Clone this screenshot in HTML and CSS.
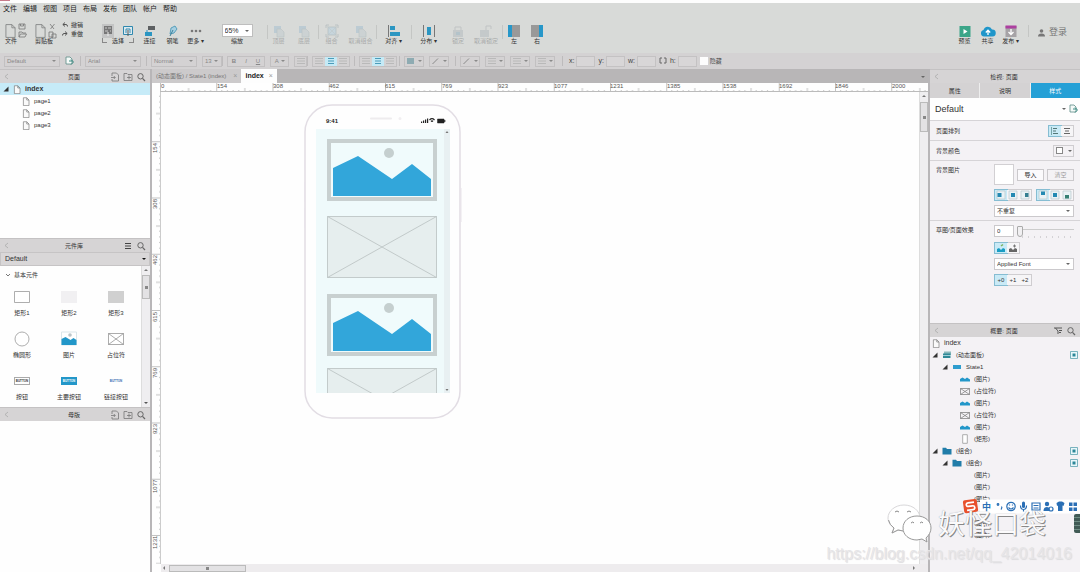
FILE: index.html
```html
<!DOCTYPE html>
<html lang="zh-CN">
<head>
<meta charset="utf-8">
<title>index</title>
<link rel="stylesheet" href="styles.css">
</head>
<body>
<svg class="defs" aria-hidden="true">
  <defs>
    <symbol id="page" viewBox="0 0 10 12"><path d="M1.5 1h4.5l3 3v7.500h-7.500zM6 1v3h3" fill="#fafafa" stroke="#777" stroke-width=".9"/></symbol>
    <symbol id="bigpage" viewBox="0 0 12 16"><path d="M1 1h6.500l3.500 3.500v10.500h-10zM7.500 1v3.500h3.500" fill="none" stroke="#7d8080" stroke-width=".9"/></symbol>
    <symbol id="addpage" viewBox="0 0 10 10"><path d="M2 4V1h4.500l2 2v6H2V7M1 5.500h4M3.800 4L5.300 5.500 3.800 7" fill="none" stroke="#777" stroke-width=".8"/></symbol>
    <symbol id="addfolder" viewBox="0 0 10 10"><path d="M1 8.500V1.500h3l1 1h4v6zM4 5.500h4M6 3.500v4" fill="none" stroke="#777" stroke-width=".8"/></symbol>
    <symbol id="search" viewBox="0 0 10 10"><circle cx="4.500" cy="4.300" r="2.700" fill="none" stroke="#666"/><path d="M6.500 6.300L9 9" stroke="#666" stroke-width="1.200"/></symbol>
    <symbol id="menu" viewBox="0 0 10 10"><path d="M2 2.500h6M2 5h6M2 7.500h6" stroke="#444"/></symbol>
    <symbol id="filter" viewBox="0 0 10 10"><path d="M1 2h8M2.500 2l2.500 3v3M6 4.500h3M6 6.500h2" stroke="#555" fill="none"/></symbol>
    <symbol id="collapse" viewBox="0 0 10 10"><path d="M6 2L3 4.500 6 7" stroke="#aaa" stroke-width=".8" fill="none"/></symbol>
    <symbol id="fold" viewBox="0 0 6 6"><path d="M5.500 .5v5h-5z" fill="#333"/></symbol>
    <symbol id="styleedit" viewBox="0 0 10 10"><path d="M1 1h4l2 2v5H1z" fill="#f5faf8" stroke="#5a8b86" stroke-width=".8"/><path d="M4 5h3.500M6 3.500L8.500 6 6 8.500" stroke="#3c8b83" fill="none"/></symbol>
    <symbol id="mountain" viewBox="0 0 10 6"><path d="M0 5.500V3L2.500 1.500 5 3 7 1.500 10 3.500v2z" fill="#2397c9"/></symbol>
    <symbol id="cross" viewBox="0 0 10 7"><path d="M.5 .5h9v6h-9zM.5 .5l9 6M9.500 .5l-9 6" fill="none" stroke="#777" stroke-width=".7"/></symbol>
    <symbol id="phonebox" viewBox="0 0 6 10"><path d="M.7 .7h4.600v8.600H.7z" fill="#fff" stroke="#999" stroke-width=".8"/></symbol>
    <symbol id="stack" viewBox="0 0 10 8"><path d="M2 .5h7v4H2z" fill="#89b8bb"/><path d="M1 2.500h7.500V7H1z" fill="#2f8896"/><path d="M1 4.500h8" stroke="#d4eef3" stroke-width=".7"/></symbol>
    <symbol id="state" viewBox="0 0 10 6"><path d="M1 1h8v4H1z" fill="#2e9dce"/></symbol>
    <symbol id="folder" viewBox="0 0 10 8"><path d="M.5 .8h3.500l1 1.200h4.500v5.500h-9z" fill="#217da9"/></symbol>
    <symbol id="target" viewBox="0 0 8 8"><path d="M.5 .5h7v7h-7z" fill="#e9f7fa" stroke="#5ba1ae" stroke-width=".8"/><path d="M2.500 2.500h3v3h-3z" fill="#2c8799"/></symbol>
    <symbol id="alignl" viewBox="0 0 10 10"><path d="M1.500 1v8" stroke="#588" stroke-width=".7"/><path d="M3 2.500h4M3 5h3M3 7.500h5" stroke="#577" stroke-width="1"/></symbol>
    <symbol id="alignc" viewBox="0 0 10 10"><path d="M2 2.500h6M3 5h4M2 7.500h6" stroke="#666"/></symbol>
    <symbol id="img-l" viewBox="0 0 10 10"><path d="M1 1h8v8H1z" fill="#e9f2f5" stroke="#b9c8cd" stroke-width=".7"/><path d="M1.500 3h4v4h-4z" fill="#2389b2"/></symbol>
    <symbol id="img-c" viewBox="0 0 10 10"><path d="M1 1h8v8H1z" fill="#e9f2f5" stroke="#b9c8cd" stroke-width=".7"/><path d="M3 3h4v4H3z" fill="#2389b2"/></symbol>
    <symbol id="img-r" viewBox="0 0 10 10"><path d="M1 1h8v8H1z" fill="#e9f2f5" stroke="#b9c8cd" stroke-width=".7"/><path d="M5 3h3.500v4H5z" fill="#357f91"/></symbol>
    <symbol id="img-t" viewBox="0 0 10 10"><path d="M1 1h8v8H1z" fill="#e9f2f5" stroke="#b9c8cd" stroke-width=".7"/><path d="M3 1.500h4V5H3z" fill="#2389b2"/></symbol>
    <symbol id="img-b" viewBox="0 0 10 10"><path d="M1 1h8v8H1z" fill="#e9f2f5" stroke="#b9c8cd" stroke-width=".7"/><path d="M3 5h4v3.500H3z" fill="#357f73"/></symbol>
    <symbol id="sketch" viewBox="0 0 10 10"><path d="M1 9V6l2-1 2 2 2-2 2 1v3z" fill="#1a9dc4"/><path d="M5 3l2-1.500" stroke="#7db35d" stroke-width="1.500"/></symbol>
    <symbol id="sketchg" viewBox="0 0 10 10"><path d="M1 9V6l2-1 2 2 2-2 2 1v3z" fill="#666"/><path d="M5 3h3M6.500 1.500v3" stroke="#777"/></symbol>
    <symbol id="layers" viewBox="0 0 14 14"><path d="M2 2h7v7H2z" fill="#bccbd3"/><path d="M5 5h4l3 3v5H5z" fill="#ccd2d3" stroke="#bbc2c4" stroke-width=".6"/></symbol>
    <symbol id="group" viewBox="0 0 14 14"><path d="M3 3h8v8H3z" fill="#c6d5dc" stroke="#aeb9bd" stroke-width=".6"/><path d="M1 4V1h3M10 1h3v3M13 10v3h-3M4 13H1v-3" fill="none" stroke="#b5bdbf" stroke-width=".8"/><path d="M2 2l10 10M12 2L2 12" fill="none" stroke="#c0c8ca" stroke-width=".6"/></symbol>
    <symbol id="lock" viewBox="0 0 14 14"><path d="M4 6V3h6v3" fill="none" stroke="#c0c3c4"/><path d="M2 6h10v7H2z" fill="#c4c9ca"/><path d="M5 8h4v3H5z" fill="#b3c3ca"/></symbol>
    <symbol id="unlock" viewBox="0 0 14 14"><path d="M7 6V2h5v3" fill="none" stroke="#c0c3c4"/><path d="M1 6h9v7H1z" fill="#c4c9ca"/></symbol>
    <symbol id="f-lines" viewBox="0 0 10 8"><path d="M1 1.500h8M1 4h8M1 6.500h8" stroke="#b2b2b2" stroke-width=".8"/></symbol>
    <symbol id="f-sel" viewBox="0 0 10 8"><path d="M2 1.500h6M2 4h6M2 6.500h6" stroke="#4b9cba"/></symbol>
    <symbol id="f-fill" viewBox="0 0 10 8"><path d="M1 1h7v6H1z" fill="#8eabb2"/></symbol>
    <symbol id="f-pen" viewBox="0 0 10 8"><path d="M1.500 7L7 1.500" stroke="#8b8b8b" stroke-width="1"/></symbol>
  </defs>
</svg>

<header class="top">
  <div class="titlestrip"><span class="brand"></span></div>
  <nav class="menubar">
    <button>文件</button><button>编辑</button><button>视图</button><button>项目</button><button>布局</button><button>发布</button><button>团队</button><button>帐户</button><button>帮助</button>
  </nav>
  <div class="toolbar">
    <div class="tool left"><span class="ico"><svg width="11" height="16"><use href="#bigpage"/></svg><svg width="9" height="16" viewBox="0 0 9 16" fill="none" stroke="#777" stroke-width=".8"><path d="M1 1h6v5H1zM2.500 1v2h3V1M1 14V9h3l1 1h3M1 14h6l1.500-3h-6z"/></svg></span><span>文件</span></div>
    <div class="tool left"><span class="ico"><svg width="11" height="16"><use href="#bigpage"/></svg><svg width="9" height="16" viewBox="0 0 9 16" fill="none" stroke="#777" stroke-width=".8"><path d="M2 1l4 5M6.500 1l-4 5M1 9h4v5H1zM4 11h4v4H4z"/></svg></span><span>剪贴板</span></div>
    <div class="undo"><button><svg width="6" height="6" viewBox="0 0 6 6"><path d="M3 .5L.8 2.500 3 4.500M1 2.500h3q1.500 0 1.500 2" fill="none" stroke="#555"/></svg>撤销</button><button><svg width="6" height="6" viewBox="0 0 6 6"><path d="M3 .5l2.200 2L3 4.500M5 2.500H2Q.5 2.500.5 4.500" fill="none" stroke="#555"/></svg>重做</button></div>
    <div class="tool"><span class="ico modes"><svg class="on" width="12" height="14" viewBox="0 0 12 14"><path d="M2 2h8v8H2z" fill="#777"/><path d="M3 4h2M6 4h3M3 7h3M8 7h1" stroke="#ccc"/><path d="M6 8v4" stroke="#eee"/></svg><svg width="12" height="14" viewBox="0 0 12 14"><path d="M1.500 2.500h9v8h-9z" fill="#dceaf0" stroke="#2f88ae"/><path d="M4 9V5h4v4" fill="none" stroke="#378bae"/><path d="M6 6v6" stroke="#555"/></svg></span><span class="bracket">选择</span></div>
    <button class="tool"><span class="ico"><svg width="14" height="14" viewBox="0 0 14 14"><path d="M5 2h7v4H5z" fill="#5d6062"/><path d="M2 8h7v4H2z" fill="#2b96c2"/><path d="M4 8V6" stroke="#2b96c2"/></svg></span><span>连接</span></button>
    <button class="tool"><span class="ico"><svg width="12" height="14" viewBox="0 0 12 14"><path d="M3 10L4 4l4-2 2 3-3 4z" fill="#a7cfe0" stroke="#3e90b2" stroke-width=".8"/><path d="M3 12l3-6" stroke="#3d8099"/></svg></span><span>钢笔</span></button>
    <button class="tool"><span class="ico"><svg width="14" height="14" viewBox="0 0 14 14" fill="#777"><circle cx="3" cy="7" r="1.300"/><circle cx="7" cy="7" r="1.300"/><circle cx="11" cy="7" r="1.300"/></svg></span><span>更多 ▾</span></button>
    <label class="tool"><span class="ico"><span class="select zoom"><select><option>65%</option></select></span></span><span>缩放</span></label>
    <button class="tool off sep"><span class="ico"><svg width="14" height="14"><use href="#layers"/></svg></span><span>顶层</span></button>
    <button class="tool off"><span class="ico"><svg width="14" height="14"><use href="#layers"/></svg></span><span>底层</span></button>
    <button class="tool off sep"><span class="ico"><svg width="14" height="14"><use href="#group"/></svg></span><span>组合</span></button>
    <button class="tool off"><span class="ico"><svg width="14" height="14"><use href="#layers"/></svg></span><span>取消组合</span></button>
    <button class="tool sep"><span class="ico"><svg width="14" height="14" viewBox="0 0 14 14"><path d="M1.500 1v12" stroke="#777"/><path d="M3 2h5v4H3zM3 8h10v4H3z" fill="#2b96c2"/></svg></span><span>对齐 ▾</span></button>
    <button class="tool sep"><span class="ico"><svg width="14" height="14" viewBox="0 0 14 14"><path d="M1.500 1v12M12.500 1v12" stroke="#777"/><path d="M5 3h4v8H5z" fill="#2b96c2"/></svg></span><span>分布 ▾</span></button>
    <button class="tool off"><span class="ico"><svg width="14" height="14"><use href="#lock"/></svg></span><span>锁定</span></button>
    <button class="tool off"><span class="ico"><svg width="14" height="14"><use href="#unlock"/></svg></span><span>取消锁定</span></button>
    <button class="tool sep"><span class="ico"><svg width="14" height="14" viewBox="0 0 14 14"><path d="M1 1h12v12H1z" fill="#999"/><path d="M1 1h4v12H1z" fill="#2797c9"/></svg></span><span>左</span></button>
    <button class="tool"><span class="ico"><svg width="14" height="14" viewBox="0 0 14 14"><path d="M1 1h12v12H1z" fill="#999"/><path d="M9 1h4v12H9z" fill="#2797c9"/></svg></span><span>右</span></button>
    <span></span>
    <button class="tool"><span class="ico"><svg width="14" height="14" viewBox="0 0 14 14"><path d="M1.500 2h11v11h-11z" fill="#3ba588"/><path d="M5.500 5v5l4-2.500z" fill="#fff"/></svg></span><span>预览</span></button>
    <button class="tool"><span class="ico"><svg width="16" height="14" viewBox="0 0 16 14"><path d="M4 12.500a3.300 3.300 0 0 1-.5-6.500A4.500 4.500 0 0 1 12 5.500a3.500 3.500 0 0 1 .5 7z" fill="#1f96ca"/><path d="M8 11V6.500M5.800 8.500L8 6.200l2.200 2.300" stroke="#fff" stroke-width="1.300" fill="none"/></svg></span><span>共享</span></button>
    <button class="tool"><span class="ico"><svg width="14" height="14" viewBox="0 0 14 14"><path d="M1.500 2h11v11h-11z" fill="#a6a3a6"/><path d="M1.500 1.500h11v3h-11z" fill="#ad3fa0"/><path d="M7 5v5M4.500 8L7 10.500 9.500 8" stroke="#fff" stroke-width="1.300" fill="none"/></svg></span><span>发布 ▾</span></button>
    <button class="login"><svg width="7" height="8" viewBox="0 0 7 8"><circle cx="3.500" cy="2" r="1.800" fill="#777"/><path d="M0 7.500q0-3 3.500-3t3.500 3z" fill="#777"/></svg>登录</button>
  </div>
  <div class="formatbar">
    <div class="fgroup"><span class="select w56"><select aria-label="样式"><option>Default</option></select></span><svg width="10" height="10"><use href="#styleedit"/></svg></div>
    <div class="fgroup"><span class="select w56"><select aria-label="字体"><option>Arial</option></select></span></div>
    <div class="fgroup"><span class="select w46"><select aria-label="字形"><option>Normal</option></select></span><span class="select w20"><select aria-label="字号"><option>13</option></select></span></div>
    <div class="fgroup"><span class="seg"><button><b>B</b></button><button><i>I</i></button><button><u>U</u></button></span><button class="drop">A</button><button class="fbtn"><svg width="10" height="8"><use href="#f-lines"/></svg></button></div>
    <div class="fgroup"><span class="seg"><button><svg width="10" height="8"><use href="#f-lines"/></svg></button><button class="sel"><svg width="10" height="8"><use href="#f-sel"/></svg></button><button><svg width="10" height="8"><use href="#f-lines"/></svg></button></span></div>
    <div class="fgroup"><span class="seg"><button><svg width="10" height="8"><use href="#f-lines"/></svg></button><button class="sel"><svg width="10" height="8"><use href="#f-sel"/></svg></button><button><svg width="10" height="8"><use href="#f-lines"/></svg></button></span></div>
    <div class="fgroup"><button class="drop"><svg width="10" height="8"><use href="#f-fill"/></svg></button><button class="drop"><svg width="10" height="8"><use href="#f-pen"/></svg></button></div>
    <div class="fgroup"><button class="drop"><svg width="10" height="8"><use href="#f-pen"/></svg></button><button class="drop"><svg width="10" height="8"><use href="#f-lines"/></svg></button><button class="drop"><svg width="10" height="8"><use href="#f-lines"/></svg></button><button class="drop"><svg width="10" height="8"><use href="#f-lines"/></svg></button></div>
    <div class="fgroup pos"><label>x:<input></label><label>y:<input></label><label>w:<input></label><svg width="8" height="8" viewBox="0 0 8 8"><path d="M3 1H1v5h2M5 1h2v5H5" fill="none" stroke="#666"/></svg><label>h:<input></label><label class="hide"><input type="checkbox">隐藏</label></div>
  </div>
</header>

<main class="workspace">
  <aside class="side leftside">
    <section class="panel">
      <h2 class="phead"><svg width="10" height="10"><use href="#collapse"/></svg><span>页面</span><svg width="10" height="10"><use href="#addpage"/></svg><svg width="10" height="10"><use href="#addfolder"/></svg><svg width="10" height="10"><use href="#search"/></svg></h2>
      <ul class="tree">
        <li class="row cur"><svg width="6" height="6"><use href="#fold"/></svg><svg width="8" height="9"><use href="#page"/></svg><b>index</b></li>
        <li class="row d2"><svg width="8" height="9"><use href="#page"/></svg>page1</li>
        <li class="row d2"><svg width="8" height="9"><use href="#page"/></svg>page2</li>
        <li class="row d2"><svg width="8" height="9"><use href="#page"/></svg>page3</li>
      </ul>
    </section>
    <section class="panel">
      <h2 class="phead"><svg width="10" height="10"><use href="#collapse"/></svg><span>元件库</span><span></span><svg width="10" height="10"><use href="#menu"/></svg><svg width="10" height="10"><use href="#search"/></svg></h2>
      <span class="select library"><select aria-label="元件库"><option>Default</option></select></span>
      <div class="libbody">
        <div class="libmain">
          <h3><svg width="6" height="6" viewBox="0 0 6 6"><path d="M1 2l2 2 2-2" fill="none" stroke="#555" stroke-width=".8"/></svg>基本元件</h3>
          <div class="widgets">
            <figure><svg width="18" height="16" viewBox="0 0 18 16"><path d="M1.500 2.500h15v11h-15z" fill="#fff" stroke="#999" stroke-width=".8"/></svg><figcaption>矩形1</figcaption></figure>
            <figure><svg width="18" height="16" viewBox="0 0 18 16"><path d="M1 2h16v12H1z" fill="#f1f0f2"/></svg><figcaption>矩形2</figcaption></figure>
            <figure><svg width="18" height="16" viewBox="0 0 18 16"><path d="M1 2h16v12H1z" fill="#d0d0d0"/></svg><figcaption>矩形3</figcaption></figure>
            <figure><svg width="18" height="16" viewBox="0 0 18 16"><circle cx="9" cy="8" r="7" fill="#fff" stroke="#999" stroke-width=".8"/></svg><figcaption>椭圆形</figcaption></figure>
            <figure><svg width="18" height="16" viewBox="0 0 18 16"><path d="M1.500 1h15v13h-15z" fill="#fff" stroke="#dbe6ea"/><circle cx="10" cy="4" r="1.800" fill="#bbc5c8"/><path d="M1.500 14V8l4-2 5 3 3-2 3 2v5z" fill="#2397c9"/></svg><figcaption>图片</figcaption></figure>
            <figure><svg width="18" height="16" viewBox="0 0 18 16"><path d="M1.500 2.500h15v11h-15zM1.500 2.500l15 11M16.500 2.500l-15 11" fill="#fff" stroke="#888" stroke-width=".7"/></svg><figcaption>占位符</figcaption></figure>
            <figure><span class="mini">BUTTON</span><figcaption>按钮</figcaption></figure>
            <figure><span class="mini primary">BUTTON</span><figcaption>主要按钮</figcaption></figure>
            <figure><span class="mini link">BUTTON</span><figcaption>链接按钮</figcaption></figure>
          </div>
        </div>
        <div class="vscroll"><span class="up"></span><span class="thumb"></span><span class="space"></span><span class="down"></span></div>
      </div>
    </section>
    <section class="panel">
      <h2 class="phead"><svg width="10" height="10"><use href="#collapse"/></svg><span>母版</span><svg width="10" height="10"><use href="#addpage"/></svg><svg width="10" height="10"><use href="#addfolder"/></svg><svg width="10" height="10"><use href="#search"/></svg></h2>
    </section>
  </aside>

  <section class="editor">
    <div class="tabs"><button class="tab">(动态面板) / State1 (index)<span>×</span></button><button class="tab active">index<span>×</span></button><i class="tri"></i></div>
    <svg class="hruler" width="100%" height="9">
      <defs><pattern id="hticks" x="8" width="56.250" height="9" patternUnits="userSpaceOnUse"><path d="M.5 0v9M28.600 5v4M5.600 7v2M11.200 7v2M16.900 7v2M22.500 7v2M33.700 7v2M39.400 7v2M45 7v2M50.600 7v2" stroke="#b4b4b4" stroke-width=".8"/></pattern></defs>
      <rect x="8" width="100%" height="9" fill="url(#hticks)"/>
      <path d="M8 8.500h2000" stroke="#bbb"/>
      <g><text x="9" y="5">0</text><text x="65" y="5">154</text><text x="121" y="5">308</text><text x="177" y="5">462</text><text x="233" y="5">615</text><text x="290" y="5">769</text><text x="346" y="5">923</text><text x="402" y="5">1077</text><text x="458" y="5">1231</text><text x="515" y="5">1385</text><text x="571" y="5">1538</text><text x="627" y="5">1692</text><text x="683" y="5">1846</text><text x="740" y="5">2000</text></g>
    </svg>
    <div class="stage">
      <svg class="vruler" width="9" height="100%">
        <defs><pattern id="vticks" y="-7" width="9" height="56.250" patternUnits="userSpaceOnUse"><path d="M0 .5h9M4 28.600h5M7 5.600h2M7 11.200h2M7 16.900h2M7 22.500h2M7 33.700h2M7 39.400h2M7 45h2M7 50.600h2" stroke="#b4b4b4" stroke-width=".8"/></pattern></defs>
        <rect width="9" height="100%" fill="url(#vticks)"/>
        <path d="M8.500 0v2000" stroke="#ccc"/>
        <g><text transform="translate(5 61) rotate(-90)">154</text><text transform="translate(5 117) rotate(-90)">308</text><text transform="translate(5 173) rotate(-90)">462</text><text transform="translate(5 230) rotate(-90)">615</text><text transform="translate(5 286) rotate(-90)">769</text><text transform="translate(5 342) rotate(-90)">923</text><text transform="translate(5 401) rotate(-90)">1077</text><text transform="translate(5 457) rotate(-90)">1231</text></g>
      </svg>
      <div class="canvas">
        <svg class="phone" width="158" height="318" viewBox="0 0 158 318">
          <defs>
            <clipPath id="screen"><path d="M10 24h136v266H10z"/></clipPath>
            <g id="photo"><path d="M2 2h106v58H2z" fill="#f0fbfc" stroke="#c8d0d0" stroke-width="4"/><circle cx="62" cy="14" r="5" fill="#c5cfcf"/><path d="M6 57V29l25-12 34 23 20-15 19 15v17z" fill="#32a6da"/></g>
            <g id="holder"><path d="M.5 .5h109v61H.5zM.5 .5l109 61M109.500 .5l-109 61" fill="#e6eeee" stroke="#b9c0c0" stroke-width=".8"/></g>
          </defs>
          <rect x="1" y="2" width="155" height="313" rx="27" fill="#fefefe" stroke="#e2dde4" stroke-width="1.500"/>
          <path d="M.5 57v10M.5 79v20M.5 105v20M157 85v34" stroke="#e8e3ea"/>
          <path d="M67 15.500h20" stroke="#eeecee" stroke-width="2" stroke-linecap="round"/><circle cx="96" cy="15.500" r="1.500" fill="#f1eff1"/>
          <text x="22" y="20" class="clock">9:41</text>
          <path d="M117 20v-1.500h1.200V20zM119 20v-2.500h1.200V20zM121 20v-3.500h1.200V20zM123 20v-4.500h1.200V20z" fill="#222"/>
          <path d="M125.500 17q2.500-2.500 5 0M127 18.500q1-1 2 0" stroke="#222" stroke-width="1.200" fill="none"/><path d="M133.500 16h6.500v4h-6.500zM140.300 17.200h.8v1.600h-.8z" fill="#222" stroke="#222" stroke-width=".5"/>
          <g clip-path="url(#screen)">
            <path d="M12 26h130v264H12z" fill="#effafb"/><path d="M140 26h6v264h-6z" fill="#e8f0f2"/>
            <use href="#photo" x="23" y="36"/><use href="#holder" x="23" y="113"/><use href="#photo" x="23" y="191"/><use href="#holder" x="23" y="265"/>
            <path d="M141.500 30l1.500-2 1.500 2zM141.500 286l1.500 2 1.500-2z" fill="#777"/>
          </g>
        </svg>
      </div>
      <div class="vscroll big"><span class="up"></span><span class="thumb"></span><span class="space"></span></div>
    </div>
    <div class="hscroll"><span class="la"></span><span class="thumb"></span><span class="space"></span><span class="ra"></span></div>
  </section>

  <aside class="side rightside">
    <section class="panel">
      <h2 class="phead one"><svg width="10" height="10"><use href="#collapse"/></svg><span>检视: 页面</span></h2>
      <div class="itabs"><button>属性</button><button>说明</button><button class="on">样式</button></div>
      <div class="stylerow"><span class="select plain"><select aria-label="页面样式"><option>Default</option></select></span><svg width="10" height="10"><use href="#styleedit"/></svg></div>
      <div class="prop"><span>页面排列</span><div class="ctl end"><span class="seg2"><button class="sel"><svg width="10" height="10"><use href="#alignl"/></svg></button><button><svg width="10" height="10"><use href="#alignc"/></svg></button></span></div></div>
      <div class="prop"><span>背景颜色</span><div class="ctl end"><button class="color"><i></i></button></div></div>
      <div class="prop tall"><span>背景图片</span>
        <div class="ctl">
          <div class="line imp"><span class="thumbbox"></span><button class="txt">导入</button><button class="txt dis">清空</button></div>
          <div class="line between"><span class="seg2"><button class="sel"><svg width="10" height="10"><use href="#img-l"/></svg></button><button><svg width="10" height="10"><use href="#img-c"/></svg></button><button><svg width="10" height="10"><use href="#img-r"/></svg></button></span><span class="seg2"><button class="sel"><svg width="10" height="10"><use href="#img-t"/></svg></button><button><svg width="10" height="10"><use href="#img-c"/></svg></button><button><svg width="10" height="10"><use href="#img-b"/></svg></button></span></div>
          <span class="select box"><select aria-label="重复"><option>不重复</option></select></span>
        </div>
      </div>
      <div class="prop tall"><span>草图/页面效果</span>
        <div class="ctl">
          <div class="line"><input class="num" value="0" aria-label="草图程度"><input class="slider" type="range" value="0" aria-label="草图"></div>
          <div class="line"><span class="seg2"><button class="sel"><svg width="10" height="10"><use href="#sketch"/></svg></button><button><svg width="10" height="10"><use href="#sketchg"/></svg></button></span></div>
          <span class="select box"><select aria-label="字体"><option>Applied Font</option></select></span>
          <div class="line"><span class="seg2"><button class="sel">+0</button><button>+1</button><button>+2</button></span></div>
        </div>
      </div>
    </section>
    <section class="panel outline">
      <h2 class="phead two"><svg width="10" height="10"><use href="#collapse"/></svg><span>概要: 页面</span><svg width="10" height="10"><use href="#filter"/></svg><svg width="10" height="10"><use href="#search"/></svg></h2>
      <ul class="tree layers">
        <li class="row root"><svg width="8" height="9"><use href="#page"/></svg>index</li>
        <li class="row"><svg width="6" height="6"><use href="#fold"/></svg><svg width="10" height="8"><use href="#stack"/></svg>(动态面板)<svg class="tgt" width="8" height="8"><use href="#target"/></svg></li>
        <li class="row o2"><svg width="6" height="6"><use href="#fold"/></svg><svg width="10" height="6"><use href="#state"/></svg>State1</li>
        <li class="row o3"><svg width="10" height="6"><use href="#mountain"/></svg>(图片)</li>
        <li class="row o3"><svg width="10" height="7"><use href="#cross"/></svg>(占位符)</li>
        <li class="row o3"><svg width="10" height="6"><use href="#mountain"/></svg>(图片)</li>
        <li class="row o3"><svg width="10" height="7"><use href="#cross"/></svg>(占位符)</li>
        <li class="row o3"><svg width="10" height="6"><use href="#mountain"/></svg>(图片)</li>
        <li class="row o3"><svg width="10" height="10"><use href="#phonebox"/></svg>(矩形)</li>
        <li class="row"><svg width="6" height="6"><use href="#fold"/></svg><svg width="10" height="8"><use href="#folder"/></svg>(组合)<svg class="tgt" width="8" height="8"><use href="#target"/></svg></li>
        <li class="row o2"><svg width="6" height="6"><use href="#fold"/></svg><svg width="10" height="8"><use href="#folder"/></svg>(组合)<svg class="tgt" width="8" height="8"><use href="#target"/></svg></li>
        <li class="row o4">(图片)</li>
        <li class="row o4">(图片)</li>
        <li class="row o4">(图片)</li>
        <li class="row o4"></li>
        <li class="row o4">(图片)</li>
        <li class="row o4">(图片)</li>
      </ul>
    </section>
  </aside>
</main>

<div class="ime">
  <svg width="118" height="17" viewBox="0 0 118 17">
    <path d="M18 1.500h100v14H18z" fill="#fff"/>
    <g transform="rotate(-8 9 8)"><rect x="1.500" y="1.500" width="14" height="13" rx="2" fill="#e8502c"/><path d="M12.500 4.500H6.500q-2 0-2 1.800t2 1.700h4q2 0 2 1.900t-2 1.900h-6" fill="none" stroke="#fff" stroke-width="1.700"/></g>
    <text x="20" y="12" class="zh">中</text>
    <g fill="none" stroke="#2a6fb5" stroke-width="1.200"><circle cx="36" cy="6.500" r=".8"/><path d="M39.500 8.500q1 1-.5 3"/><circle cx="49" cy="8.500" r="4.200"/><path d="M46.500 9.500q2.500 3 5 0M47.500 6.500v1M50.500 6.500v1"/><path d="M58.500 7.500q0 4 3 4t3-4M61.500 11.500v2"/><path d="M70 5h8v7h-8zM71.500 7.500h5M71.500 10h5"/><circle cx="89" cy="11" r="2"/></g>
    <g fill="#2a6fb5"><rect x="60" y="3.500" width="3" height="6.500" rx="1.500"/><circle cx="85" cy="6" r="2.200"/><path d="M81.500 13q0-4 3.500-4 2 0 2.500 1.500v2.500zM94.500 5l2.500-1.500h3L102.500 5l-1 3-1-.5v5.500h-4.500v-5.500l-1 .5zM107 4.500h3.500v3.500H107zM111.500 4.500h3.500v3.500h-3.500zM107 9.500h3.500v3.500H107zM111.500 9.500h3.500v3.500h-3.500z"/></g>
  </svg>
</div>
<div class="edgewidget"></div>
<div class="wechat">
  <svg width="46" height="40" viewBox="0 0 46 40"><path d="M17 2C8 2 1 8 1 15c0 4 2 7 6 10l-2 5 6-3 6 1C26 28 33 22 33 15S26 2 17 2z" fill="#fff" stroke="#d8d7d9"/><path d="M1.500 17q1 5 5.500 8l-2 5 6-3 5 1" fill="none" stroke="#999"/><path d="M30 13c-8 0-14 5-14 12s6 12 14 12l5-1 5 3-1-4c3-3 5-6 5-10 0-7-6-12-14-12z" fill="#fff" stroke="#999"/><path d="M8 9q2-2 4 0M20 9q2-2 4 0M24 20q2-2 3 0M33 20q2-2 3 0" fill="none" stroke="#888"/></svg>
  <span>妖怪口袋</span>
</div>
<div class="siteurl">https://blog.csdn.net/qq_42014016</div>
</body>
</html>
```
FILE: styles.css
```css
* { box-sizing: border-box; }
html, body { height: 100%; }
body {
  margin: 0;
  display: flex;
  flex-direction: column;
  overflow: hidden;
  position: relative;
  font: 6px/8px "Liberation Sans", "Noto Sans CJK SC", sans-serif;
  color: #333;
  background: #fefefe;
}
button, input, select { font: inherit; color: inherit; margin: 0; padding: 0; border: 0; background: none; border-radius: 0; min-width: 0; }
svg { display: block; flex: none; }
ul, figure, h2, h3 { margin: 0; padding: 0; list-style: none; font-weight: normal; }
.defs { position: absolute; width: 0; height: 0; }

/* header */
.top { background: #d8dad8; flex: none; }
.titlestrip { height: 3px; background: #fdfdfd; }
.brand { display: block; width: 10px; height: 1px; background: #c77b8a; }
.menubar { display: flex; gap: 6px; padding: 0 3px; height: 12px; align-items: center; font-size: 7px; color: #222; }
.toolbar {
  display: grid;
  height: 38px;
  grid-template-columns: 30px 30px 38px 40px 23px 23px 23px 60px 23px 28px 27px 31px 35px 35px 24px 32px 24px 22px 1fr 23px 23px 23px 58px;
  align-items: start;
}
.tool { display: flex; flex-direction: column; align-items: center; padding: 8px 0 0; line-height: 7px; white-space: nowrap; }
.tool.left { align-items: flex-start; padding-left: 5px; }
.ico { display: flex; align-items: center; justify-content: center; height: 15px; gap: 2px; }
.tool.off { color: #a9abab; }
.sep { background: linear-gradient(#c4c6c4, #c4c6c4) 0 10px / 1px 14px no-repeat; }
.undo { display: flex; flex-direction: column; padding: 6px 2px; gap: 1px; }
.undo button { display: flex; align-items: center; gap: 3px; height: 8px; }
.modes { gap: 8px; }
.modes .on { background: #c3c4c4; }
.bracket { display: flex; gap: 5px; }
.bracket::before, .bracket::after { content: ""; width: 4px; height: 4px; border: 0 solid #888; border-bottom-width: 1px; }
.bracket::before { border-left-width: 1px; }
.bracket::after { border-right-width: 1px; }
.login { display: flex; align-items: center; gap: 4px; padding: 13px 0 0 16px; font-size: 9px; line-height: 9px; color: #777; background: linear-gradient(#c4c6c4, #c4c6c4) 6px 10px / 1px 14px no-repeat; }

.select { display: flex; align-items: center; border: 1px solid #bebebe; height: 11px; padding: 0 3px 0 2px; }
.select select { flex: 1; appearance: none; outline: none; }
.select::after, .drop::after, .color::after, .tri { content: ""; flex: none; border: 2px solid transparent; border-top-color: #666; border-bottom: 0; }
.zoom { width: 31px; height: 13px; background: #fff; font-size: 7px; }

.formatbar { display: grid; grid-template-columns: 80px 66px 76px 85px 47px 45px 56px 107px 1fr; height: 16px; align-items: center; background: #d4d2d3; color: #888; }
.formatbar .select, .formatbar .drop { border-color: #c2c0c1; }
.formatbar .select::after, .formatbar .drop::after { border-top-color: #8a8a8a; }
.fgroup { display: flex; align-items: center; gap: 5px; height: 10px; padding-left: 4px; border-left: 1px solid #bdbbbc; }
.fgroup:first-child { border-left: 0; }
.w56 { width: 56px; }
.w46 { width: 46px; }
.w20 { width: 20px; }
.seg { display: flex; border: 1px solid #c2c0c1; height: 11px; }
.seg button { width: 12px; display: grid; place-items: center; }
.seg .sel { background: #c5eaf6; }
.drop, .fbtn { display: flex; align-items: center; justify-content: center; gap: 2px; height: 11px; width: 20px; border: 1px solid #c2c0c1; }
.fbtn { width: 13px; }
.pos { color: #444; gap: 3px; font-size: 7px; padding-left: 6px; }
.pos label { display: flex; align-items: center; gap: 2px; }
.pos input { width: 19px; height: 11px; border: 1px solid #c4c2c3; background: #d8d6d7; }
.pos .hide { font-size: 6px; }
.pos .hide input { appearance: none; width: 8px; height: 8px; border: 0; background: #fdfdfd; }

/* workspace */
.workspace { flex: 1; min-height: 0; display: grid; grid-template-columns: 152px minmax(0, 1fr) 152px; }
.side { display: grid; min-height: 0; grid-template-columns: minmax(0, 1fr); }
.leftside { grid-template-rows: 169fr 169fr 165fr; border-right: 2px solid #b8b6b8; background: #fefefe; }
.rightside { grid-template-rows: 254fr 249fr; border-left: 2px solid #b8b6b8; background: #f4f2f5; }
.panel { min-height: 0; overflow: hidden; display: flex; flex-direction: column; }
.phead { display: grid; grid-template-columns: 36px 1fr 10px 10px 10px; column-gap: 3px; padding: 0 4px 0 2px; align-items: center; height: 14px; flex: none; background: #d6d4d5; border-top: 1px solid #c4c2c3; font-size: 6px; text-align: center; }
.phead.one { grid-template-columns: 10px 1fr 10px; }
.phead.two { grid-template-columns: 23px 1fr 10px 10px; }
.tree { line-height: 12px; }
.row { display: flex; align-items: center; gap: 4px; height: 12px; padding: 0 2px; white-space: nowrap; }
.cur { background: #c6ebf8; font-size: 7px; padding-left: 3px; }
.d2 { padding-left: 22px; }
.layers { flex: 1; display: grid; grid-template-rows: repeat(20, 1fr); }
.layers .row { height: auto; }
.root { font-size: 7px; }
.o2 { padding-left: 12px; }
.o3 { padding-left: 30px; }
.o4 { padding-left: 44px; }
.tgt { margin-left: auto; }

.library { height: 14px; flex: none; font-size: 7px; background: #d9d7d8; border-color: #c6c4c5; padding-left: 4px; }
.library::after { border-top-color: #111; }
.libbody { flex: 1; min-height: 0; display: flex; }
.libmain { flex: 1; overflow: hidden; }
.libmain h3 { display: flex; align-items: center; gap: 3px; padding: 5px 5px 2px; font-size: 6px; }
.widgets { display: grid; grid-template-columns: repeat(3, 47px); grid-auto-rows: 42px; }
.widgets figure { display: flex; flex-direction: column; align-items: center; gap: 4px; padding: 8px 3px 0 0; }
.mini { width: 16px; height: 8px; margin: 4px 0; border: 1px solid #aaa; font: bold 3px/6px "Liberation Sans", sans-serif; text-align: center; }
.primary { background: #2397c9; border-color: #2397c9; color: #fff; }
.link { border-color: transparent; color: #356db0; }

.vscroll { width: 9px; background: #efeef0; border-left: 1px solid #ddd; display: flex; flex-direction: column; align-items: center; padding: 3px 0; }
.up, .down, .la, .ra { border: 2px solid transparent; flex: none; }
.up { border-bottom-color: #777; border-top: 0; }
.down { border-top-color: #555; border-bottom: 0; }
.vscroll .thumb { width: 8px; height: 24px; margin-top: 4px; }
.big .thumb { height: 30px; margin-top: 5px; }
.thumb { border: 1px solid #bbb; background: linear-gradient(#888, #888) center / 3px 3px no-repeat #e3e2e4; }
.space { flex: 1; }

/* editor */
.editor { display: flex; flex-direction: column; min-height: 0; min-width: 0; background: #fefefe; }
.tabs { height: 14px; flex: none; display: flex; background: #b8b6b7; align-items: stretch; }
.tab { display: flex; align-items: center; gap: 7px; padding: 0 4px; color: #777; background: #cccacb; font-size: 6px; }
.tab.active { background: #fdfdfd; color: #222; font-weight: bold; font-size: 7px; gap: 5px; }
.tab span { font-weight: normal; color: #999; font-size: 7px; }
.tabs .tri { margin: 7px 3px 0 auto; height: 2px; }
.hruler, .vruler { flex: none; fill: #555; font-size: 6px; }
.stage { flex: 1; min-height: 0; display: flex; }
.canvas { flex: 1; overflow: hidden; padding: 11px 0 0 143px; }
.clock { font: bold 6px "Liberation Sans", sans-serif; fill: #222; }
.hscroll { height: 8px; flex: none; display: flex; align-items: center; background: #eeecee; margin-left: 9px; padding: 0 13px 0 2px; gap: 4px; }
.hscroll .thumb { width: 77px; height: 7px; }
.la { border-right-color: #777; border-left: 0; }
.ra { border-left-color: #777; border-right: 0; }

/* inspector */
.itabs { display: grid; grid-template-columns: repeat(3, 1fr); height: 15px; flex: none; gap: 1px; background: #eee; }
.itabs button { background: #d4d2d3; }
.itabs .on { background: #25a0d6; color: #fff; }
.stylerow { display: flex; align-items: center; height: 22px; flex: none; background: #fefefe; padding: 0 1px 0 3px; }
.plain { flex: 1; border: 0; font-size: 9px; gap: 3px; }
.prop { display: grid; grid-template-columns: 57px minmax(0, 1fr); padding: 0 6px; height: 20px; flex: none; align-items: center; border-top: 1px solid #d6d4d7; }
.prop > span { white-space: nowrap; }
.prop.tall { height: auto; align-items: start; padding-top: 3px; padding-bottom: 3px; line-height: 12px; }
.ctl { display: flex; flex-direction: column; gap: 4px; margin-left: 1px; min-width: 0; }
.ctl.end { align-items: flex-end; }
.line { display: flex; gap: 3px; align-items: center; }
.between { justify-content: space-between; }
.seg2 { display: flex; border: 1px solid #cfcdd0; height: 12px; }
.seg2 button { width: 12px; display: grid; place-items: center; line-height: 10px; background: #f6f5f7; }
.seg2 .sel { background: #c9eaf6; box-shadow: 0 0 0 1px #86bdd2; }
.color { display: flex; align-items: center; justify-content: center; gap: 5px; width: 21px; height: 12px; border: 1px solid #cfcdd0; }
.color i { width: 7px; height: 7px; border: 1px solid #888; background: #fff; }
.thumbbox { width: 20px; height: 21px; background: #fff; border: 1px solid #d2d0d3; }
.txt { flex: 1; height: 12px; line-height: 10px; border: 1px solid #cbc9cc; background: #fbfafc; color: #222; }
.dis { color: #999; background: #f4f2f5; }
.box { height: 12px; background: #fff; border-color: #cbc9cc; }
.num { width: 20px; height: 12px; border: 1px solid #cbc9cc; background: #fff; padding-left: 2px; }
.slider {
  appearance: none;
  flex: 1;
  height: 14px;
  background:
    linear-gradient(#ccc, #ccc) 0 5px / 100% 1px no-repeat,
    repeating-linear-gradient(90deg, transparent 0 5px, #d4d2d5 5px 6px) 0 12px / 100% 2px no-repeat;
}
.slider::-webkit-slider-thumb { appearance: none; width: 6px; height: 11px; border: 1px solid #aaa; background: #f1f0f2; border-radius: 1px 1px 3px 3px; }

/* layers over the workspace */
.ime { position: absolute; right: 0; bottom: 57px; width: 118px; height: 17px; }
.zh { font: bold 9px "Noto Sans CJK SC", sans-serif; fill: #2a6fb5; }
.edgewidget { position: absolute; right: 0; bottom: 39px; width: 6px; height: 19px; background: repeating-linear-gradient(#415b55 0 3px, #6f8d84 3px 4px); border-radius: 2px 0 0 2px; }
.wechat { position: absolute; right: 34px; bottom: 29px; display: flex; align-items: center; gap: 5px; }
.wechat span { font: 27px/40px "Noto Sans CJK SC", sans-serif; color: #fbfafb; text-shadow: 1px 1px 0 #888, 0 0 1px #999; }
.siteurl { position: absolute; right: 8px; bottom: 8px; font: 16px/20px "Liberation Sans", sans-serif; color: #e6e5e7; text-shadow: 1px 1px 1px #dcdbdd; }
```
